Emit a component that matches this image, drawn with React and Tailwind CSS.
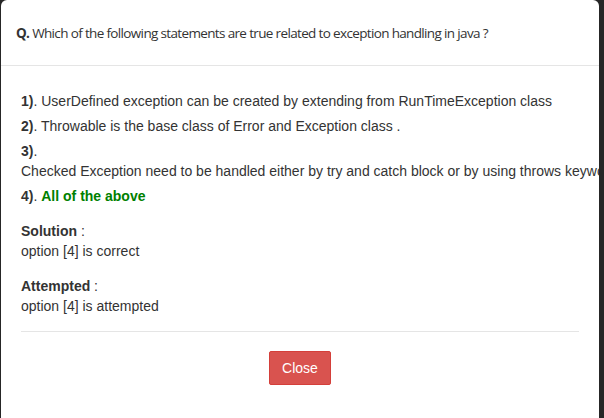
import React from 'react';

const options = [
  { no: 1, text: 'UserDefined exception can be created by extending from RunTimeException class' },
  { no: 2, text: 'Throwable is the base class of Error and Exception class .' },
  { no: 3, text: 'Checked Exception need to be handled either by try and catch block or by using throws keyword', block: true },
  { no: 4, text: 'All of the above', correct: true },
];

export default function App() {
  return (
    <div className="h-[418px] w-[604px] overflow-hidden bg-[#262626] pl-[1px]">
      {/* modal */}
      <div className="h-[430px] w-[598px] overflow-hidden rounded-t-[6px] bg-white text-[#333]">
        <div className="border-b border-[#e5e5e5] px-[15px] pt-[23px] pb-[22px] font-['Open_Sans',sans-serif] text-[13.5px] leading-[20px] tracking-[-0.65px]">
          <span className="font-bold">Q.</span> Which of the following statements are true related to exception handling in java ?
        </div>

        <div className="px-[20px] pt-[25px] font-['Liberation_Sans',Arial,sans-serif] text-[14px] leading-[20px]">
          <div className="flex flex-col gap-[5px] whitespace-nowrap">
            {options.map((o) => (
              <div key={o.no}>
                <span className="font-bold">{o.no})</span>.{' '}
                {o.block ? (
                  <div>{o.text}</div>
                ) : o.correct ? (
                  <span className="font-bold text-[#008000]">{o.text}</span>
                ) : (
                  <span>{o.text}</span>
                )}
              </div>
            ))}
          </div>

          <div className="mt-[15px]">
            <span className="font-bold">Solution</span> :
            <div>option [4] is correct</div>
          </div>

          <div className="mt-[15px]">
            <span className="font-bold">Attempted</span> :
            <div>option [4] is attempted</div>
          </div>

          <div className="mt-[15px] border-t border-[#e5e5e5]" />

          <div className="pt-[19px] text-center">
            <button className="h-[34px] rounded-[2px] border border-[#d43f3a] bg-[#d9534f] px-[12px] text-[14px] text-white">
              Close
            </button>
          </div>
        </div>
      </div>
    </div>
  );
}
